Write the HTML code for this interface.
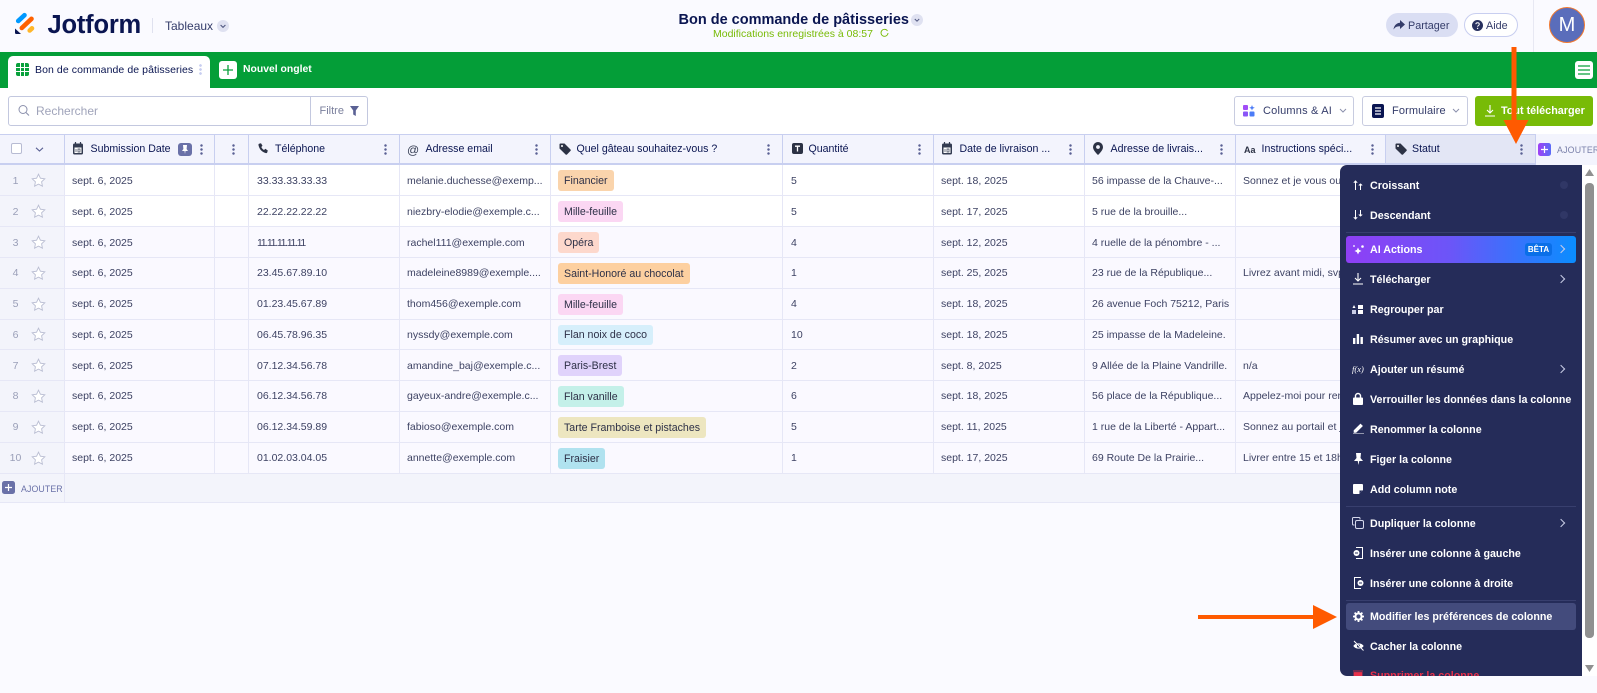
<!DOCTYPE html>
<html lang="fr"><head><meta charset="utf-8"><title>Jotform Tableaux</title>
<style>
*{box-sizing:border-box}
html,body{margin:0;padding:0}
body{width:1597px;height:693px;overflow:hidden;position:relative;background:#fafaff;font-family:"Liberation Sans",sans-serif;color:#0a1551}
.a{position:absolute;white-space:nowrap}
svg{position:absolute;display:block;overflow:visible}
.row{position:absolute;left:0;width:1597px;border-bottom:1px solid #e6e7f6;background:#faf9ff}
.row.w{background:#fff}
.row>div{position:absolute;top:0;bottom:0;display:flex;align-items:center;white-space:nowrap;font-size:10.5px;color:#3d4263;padding-top:1.5px}
.row>.n{left:0;width:64px;background:#f3f4fb;justify-content:center;padding-right:33px;color:#9a9fb8}
.star{position:absolute;left:31px;top:50%;margin-top:-7px}
.c1{left:72px}.c2{left:257px}.c3{left:407px}.c5{left:791px}.c6{left:941px}.c7{left:1092px}.c8{left:1243px}
.row>.t{left:558px;top:5px;bottom:4px;padding:1px 6px 0;border-radius:3px;color:#2d3047;font-size:10.6px}
.vl{position:absolute;top:165px;height:338px;width:1px;background:#e6e7f6}
.h{position:absolute;top:134px;height:31px;background:#f3f4fd;border-top:1.5px solid #c8cff0;border-bottom:2px solid #c8cff0;border-right:1px solid #c8cff0}
.h span{position:absolute;top:6px;font-size:10.6px;line-height:16px;color:#0a1551;white-space:nowrap}
.d{position:absolute;width:3px;height:11px;top:9px;background:radial-gradient(circle at 1.5px 1.5px,#5a6194 1.1px,transparent 1.4px) 0 0/3px 4px}
.m{position:absolute;left:1370px;font-size:10.7px;font-weight:700;color:#fff;white-space:nowrap;line-height:14px;margin-top:1px}
.dv{position:absolute;left:1346px;width:230px;height:1px;background:#383f6e}
.chev{position:absolute;left:1558px;width:6px;height:6px;border-top:1px solid #c9cde6;border-right:1px solid #c9cde6;transform:rotate(45deg)}
</style></head><body>

<!-- top header -->
<svg style="left:0;top:0" width="60" height="52" viewBox="0 0 60 52">
<path d="M18.200 21L24.500 15.200" stroke="#0099ff" stroke-width="4.600" stroke-linecap="round"/>
<path d="M21.800 28L31.500 18.800" stroke="#ff6100" stroke-width="4.600" stroke-linecap="round"/>
<path d="M29.700 30.500L32 28.300" stroke="#ffb629" stroke-width="4.600" stroke-linecap="round"/>
<path d="M15 28.500v4.200c0 .7.600 1.300 1.300 1.300h4.700z" fill="#0a1551"/>
</svg>
<div class="a" style="left:47.500px;top:9.500px;font-size:25.500px;font-weight:700;line-height:30px;letter-spacing:-.2px">Jotform</div>
<div class="a" style="left:152px;top:18px;width:1px;height:15px;background:#dfe1ef"></div>
<div class="a" style="left:165px;top:18px;font-size:12px;line-height:17px;color:#343c6a">Tableaux</div>
<svg style="left:217px;top:19.500px" width="12" height="12" viewBox="0 0 12 12"><circle cx="6" cy="6" r="6" fill="#dfe1f1"/><path d="M3.600 5l2.400 2.400L8.400 5" fill="none" stroke="#4f5680" stroke-width="1.100"/></svg>
<div class="a" style="left:678.500px;top:11px;font-size:14.500px;font-weight:700;line-height:18px">Bon de commande de pâtisseries</div>
<svg style="left:911px;top:14px" width="12" height="12" viewBox="0 0 12 12"><circle cx="6" cy="6" r="6" fill="#dfe1f1"/><path d="M3.800 5l2.200 2.200L8.200 5" fill="none" stroke="#4f5680" stroke-width="1"/></svg>
<div class="a" style="left:713px;top:26.500px;font-size:10.500px;line-height:14px;color:#78bb07">Modifications enregistrées à 08:57</div>
<svg style="left:880px;top:28px" width="9" height="9" viewBox="0 0 9 9"><path d="M7.500 3A3.500 3.500 0 1 0 8 5" fill="none" stroke="#78bb07" stroke-width=".9"/></svg>
<div class="a" style="left:1386px;top:13px;width:72px;height:24px;border-radius:12px;background:#dadef3"></div>
<svg style="left:1393px;top:19px" width="12" height="12" viewBox="0 0 12 12"><path d="M7 1l5 4.500L7 10V7.200C4 7.200 2 8.200.5 10.500 1 6.500 3.500 4 7 3.800z" fill="#343c6a"/></svg>
<div class="a" style="left:1408px;top:18px;font-size:10.800px;line-height:16px;color:#343c6a">Partager</div>
<div class="a" style="left:1464px;top:13px;width:54px;height:24px;border-radius:12px;background:#fff;border:1px solid #c8cef0"></div>
<svg style="left:1472px;top:19.500px" width="11" height="11" viewBox="0 0 11 11"><circle cx="5.500" cy="5.500" r="5.500" fill="#27305e"/><path d="M3.800 4.200c.2-2 3.500-1.900 3.500 0 0 1.300-1.700 1.300-1.700 2.500" fill="none" stroke="#fff" stroke-width="1"/><circle cx="5.600" cy="8.400" r=".7" fill="#fff"/></svg>
<div class="a" style="left:1486px;top:18px;font-size:10.800px;line-height:16px;color:#343c6a">Aide</div>
<div class="a" style="left:1533px;top:0;width:1px;height:52px;background:#e7e8f3"></div>
<div class="a" style="left:1549px;top:7px;width:36px;height:36px;border-radius:50%;background:#5a6dbb;border:1px solid #f07830;color:#fff;font-size:20px;line-height:34px;text-align:center">M</div>

<!-- green tab bar -->
<div class="a" style="left:0;top:52px;width:1597px;height:36px;background:#049e38"></div>
<div class="a" style="left:8px;top:56px;width:202px;height:32px;background:#fff;border-radius:5px 5px 0 0"></div>
<svg style="left:16px;top:63px" width="13" height="13" viewBox="0 0 13 13"><rect width="13" height="13" rx="2" fill="#09a13c"/><path d="M4.500 0v13M8.500 0v13M0 4.500h13M0 8.500h13" stroke="#fff" stroke-width="1"/></svg>
<div class="a" style="left:35px;top:62px;font-size:10.500px;line-height:16px;color:#0a1551;letter-spacing:.08px">Bon de commande de pâtisseries</div>
<div class="d" style="left:199px;top:64px;height:11px;background:radial-gradient(circle at 1.5px 1.5px,#c8cef0 1.2px,transparent 1.5px) 0 0/3px 4px"></div>
<div class="a" style="left:219px;top:61px;width:18px;height:18px;background:#fff;border-radius:3px"></div>
<svg style="left:222px;top:64px" width="12" height="12" viewBox="0 0 12 12"><path d="M6 1v10M1 6h10" stroke="#09a13c" stroke-width="1.300"/></svg>
<div class="a" style="left:243px;top:62px;font-size:10.400px;font-weight:700;line-height:16px;color:#fff">Nouvel onglet</div>
<div class="a" style="left:1575px;top:61px;width:18px;height:18px;background:#fff;border-radius:3px"></div>
<svg style="left:1578px;top:65px" width="12" height="10" viewBox="0 0 12 10"><path d="M0 1h12M0 5h12M0 9h12" stroke="#09a13c" stroke-width="1.300"/></svg>

<!-- toolbar -->
<div class="a" style="left:0;top:88px;width:1597px;height:46px;background:#fff"></div>
<div class="a" style="left:8px;top:96px;width:360px;height:30px;border:1px solid #c3c8df;border-radius:3px;background:#fff"></div>
<div class="a" style="left:310px;top:96px;width:1px;height:30px;background:#c3c8df"></div>
<svg style="left:18px;top:104px" width="12" height="13" viewBox="0 0 12 13"><circle cx="5" cy="5.500" r="4" fill="none" stroke="#8c91ad" stroke-width="1"/><path d="M8 8.500l3 3" stroke="#8c91ad" stroke-width="1.100"/></svg>
<div class="a" style="left:36px;top:102.500px;font-size:12px;line-height:17px;color:#a0a4ba">Rechercher</div>
<div class="a" style="left:319.500px;top:103.500px;font-size:11px;line-height:15px;color:#7a7f9c">Filtre</div>
<svg style="left:350px;top:106px" width="9" height="10" viewBox="0 0 9 10"><path d="M0 0h9L5.800 4.500V10L3.200 8.500v-4z" fill="#5a6194"/></svg>

<div class="a" style="left:1234px;top:96px;width:120px;height:30px;border:1px solid #c8cce0;border-radius:3px;background:#fff"></div>
<svg style="left:1243px;top:105px" width="12" height="12" viewBox="0 0 12 12"><rect width="5" height="5" rx="1" fill="#a24df7"/><rect x="6.500" y="6.500" width="5" height="5" rx="1" fill="#4c7cf7"/><rect y="6.500" width="5" height="5" rx="1" fill="#8a55f7"/><path d="M9 0l.8 2 2 .8-2 .8L9 5.500l-.8-1.900-2-.8 2-.8z" fill="#4c7cf7"/></svg>
<div class="a" style="left:1263px;top:103px;font-size:11px;line-height:16px;color:#343c6a;letter-spacing:.2px">Columns &amp; AI</div>
<svg style="left:1339px;top:108px" width="8" height="5" viewBox="0 0 8 5"><path d="M1 1l3 3 3-3" fill="none" stroke="#8c91ad" stroke-width="1"/></svg>
<div class="a" style="left:1362px;top:96px;width:106px;height:30px;border:1px solid #c8cce0;border-radius:3px;background:#fff"></div>
<svg style="left:1372px;top:104px" width="12" height="14" viewBox="0 0 12 14"><rect width="12" height="14" rx="2" fill="#0a1551"/><path d="M3 4h6M3 7h6M3 10h6" stroke="#fff" stroke-width="1.200"/></svg>
<div class="a" style="left:1392px;top:103px;font-size:11px;line-height:16px;color:#343c6a;letter-spacing:.12px">Formulaire</div>
<svg style="left:1452px;top:108px" width="8" height="5" viewBox="0 0 8 5"><path d="M1 1l3 3 3-3" fill="none" stroke="#8c91ad" stroke-width="1"/></svg>
<div class="a" style="left:1475px;top:96px;width:118px;height:30px;border-radius:3px;background:#78bb07"></div>
<svg style="left:1485px;top:105px" width="10" height="12" viewBox="0 0 10 12"><path d="M5 0v7.500M2 5l3 3 3-3M0 11h10" fill="none" stroke="#fff" stroke-width="1.100"/></svg>
<div class="a" style="left:1501px;top:103px;font-size:10.800px;font-weight:700;line-height:16px;color:#fff">Tout télécharger</div>

<!-- table head -->
<div class="h" style="left:0;width:64.500px"></div>
<div class="a" style="left:11px;top:143px;width:11px;height:11px;border:1px solid #b7bbd3;border-radius:2px;background:#fff"></div>
<svg style="left:35px;top:147px" width="9" height="5" viewBox="0 0 9 5"><path d="M1 .8L4.500 4 8 .8" fill="none" stroke="#5a6194" stroke-width="1.100"/></svg>
<div class="h" style="left:64.500px;width:150px"><span style="left:26px">Submission Date</span><div class="d" style="left:135px"></div></div>
<svg style="left:73px;top:142px" width="10" height="13" viewBox="0 0 10 13"><rect y="1.500" width="10" height="11" rx="1.500" fill="#343c52"/><path d="M2.500 0v3M7.500 0v3" stroke="#343c52" stroke-width="1.200"/><rect x="1.500" y="5.500" width="7" height="5.500" fill="#fff"/><path d="M3 7v3M5 7h2v3H5z" fill="none" stroke="#343c52" stroke-width=".7"/></svg>
<div class="a" style="left:178px;top:143px;width:14px;height:13px;border-radius:3px;background:#6a71a8"></div>
<svg style="left:181px;top:145px" width="8" height="9" viewBox="0 0 8 9"><path d="M2 0h4l-.4 4L7 6H4.500L4 9l-.5-3H1l1.400-2z" fill="#fff"/></svg>
<div class="h" style="left:214.500px;width:34px"><div class="d" style="left:17px"></div></div>
<div class="h" style="left:248.500px;width:151px"><span style="left:26.500px">Téléphone</span><div class="d" style="left:135px"></div></div>
<svg style="left:258px;top:143px" width="11" height="11" viewBox="0 0 11 11"><path d="M1 .8L3 .2l1.500 2.600-1.200 1.200c.5 1.300 1.500 2.400 2.800 3l1.200-1.200 2.500 1.700-.6 2c-.2.500-.8.700-1.300.6C4 9.200 1.500 6.500.5 2.300.4 1.700.5 1.100 1 .8z" fill="#2c3245"/></svg>
<div class="h" style="left:399.500px;width:151px"><span style="left:26px">Adresse email</span><div class="d" style="left:135px"></div></div>
<div class="a" style="left:407px;top:142.500px;font-size:12px;line-height:15px;color:#343c52">@</div>
<div class="h" style="left:550.500px;width:232px"><span style="left:26px">Quel gâteau souhaitez-vous ?</span><div class="d" style="left:216px"></div></div>
<svg style="left:559px;top:143px" width="12" height="12" viewBox="0 0 12 12"><path d="M.5 1.500c0-.6.400-1 1-1h4L11.500 6.500c.4.400.4 1 0 1.400L8 11.500c-.4.400-1 .4-1.400 0L.5 5.500z" fill="#2c3245"/><circle cx="3" cy="3" r="1" fill="#fff"/></svg>
<div class="h" style="left:782.500px;width:151px"><span style="left:26px">Quantité</span><div class="d" style="left:135px"></div></div>
<svg style="left:792px;top:143px" width="11" height="11" viewBox="0 0 11 11"><rect width="11" height="11" rx="2" fill="#2c3245"/><path d="M3 3.200h5M5.500 3.200V8.500" stroke="#fff" stroke-width="1.300"/></svg>
<div class="h" style="left:933.500px;width:151px"><span style="left:26px">Date de livraison ...</span><div class="d" style="left:135px"></div></div>
<svg style="left:942px;top:142px" width="10" height="13" viewBox="0 0 10 13"><rect y="1.500" width="10" height="11" rx="1.500" fill="#343c52"/><path d="M2.500 0v3M7.500 0v3" stroke="#343c52" stroke-width="1.200"/><rect x="1.500" y="5.500" width="7" height="5.500" fill="#fff"/><path d="M3 7v3M5 7h2v3H5z" fill="none" stroke="#343c52" stroke-width=".7"/></svg>
<div class="h" style="left:1084.500px;width:151px"><span style="left:26px">Adresse de livrais...</span><div class="d" style="left:135px"></div></div>
<svg style="left:1093px;top:142px" width="10" height="13" viewBox="0 0 10 13"><path d="M5 0a5 5 0 0 1 5 5c0 3-3 6-5 8-2-2-5-5-5-8a5 5 0 0 1 5-5z" fill="#2c3245"/><circle cx="5" cy="5" r="1.900" fill="#f3f4fd"/></svg>
<div class="h" style="left:1235.500px;width:150.500px"><span style="left:26px">Instructions spéci...</span><div class="d" style="left:135px"></div></div>
<div class="a" style="left:1244px;top:144px;font-size:9px;font-weight:700;line-height:13px;color:#2c3245">Aa</div>
<div class="h" style="left:1386px;width:150px;background:#e3e6f5"><span style="left:26px">Statut</span><div class="d" style="left:134px"></div></div>
<svg style="left:1395px;top:143px" width="12" height="12" viewBox="0 0 12 12"><path d="M.5 1.500c0-.6.400-1 1-1h4L11.500 6.500c.4.400.4 1 0 1.400L8 11.500c-.4.400-1 .4-1.400 0L.5 5.500z" fill="#2c3245"/><circle cx="3" cy="3" r="1" fill="#fff"/></svg>
<div class="a" style="left:1536px;top:134px;width:61px;height:31px;background:#f3f4fd"></div>
<div class="a" style="left:1538px;top:143px;width:13px;height:13px;border-radius:2.500px;background:linear-gradient(90deg,#a040f5,#5a6cf7)"></div>
<svg style="left:1541px;top:146px" width="7" height="7" viewBox="0 0 7 7"><path d="M3.500 0v7M0 3.500h7" stroke="#fff" stroke-width="1.200"/></svg>
<div class="a" style="left:1557px;top:143px;font-size:8.800px;line-height:14px;color:#7a80aa;letter-spacing:.2px">AJOUTER</div>

<!-- rows -->
<div class="row w" style="top:165px;height:31px"><div class="n">1<svg class="star" width="15" height="15" viewBox="0 0 15 15"><path d="M7.500 1.200l1.900 4 4.400.6-3.200 3 .8 4.400-3.900-2.100-3.900 2.100.8-4.400-3.200-3 4.400-.6z" fill="#fff" stroke="#b9bdd2" stroke-width=".9"/></svg></div><div class="c1">sept. 6, 2025</div><div class="c2">33.33.33.33.33</div><div class="c3">melanie.duchesse@exemp...</div><div class="t" style="background:#fad4ac">Financier</div><div class="c5">5</div><div class="c6">sept. 18, 2025</div><div class="c7">56 impasse de la Chauve-...</div><div class="c8">Sonnez et je vous ouvrirai la porte</div></div>
<div class="row w" style="top:196px;height:31px"><div class="n">2<svg class="star" width="15" height="15" viewBox="0 0 15 15"><path d="M7.500 1.200l1.900 4 4.400.6-3.200 3 .8 4.400-3.900-2.100-3.900 2.100.8-4.400-3.200-3 4.400-.6z" fill="#fff" stroke="#b9bdd2" stroke-width=".9"/></svg></div><div class="c1">sept. 6, 2025</div><div class="c2">22.22.22.22.22</div><div class="c3">niezbry-elodie@exemple.c...</div><div class="t" style="background:#fbd7f3">Mille-feuille</div><div class="c5">5</div><div class="c6">sept. 17, 2025</div><div class="c7">5 rue de la brouille...</div></div>
<div class="row" style="top:227px;height:30.500px"><div class="n">3<svg class="star" width="15" height="15" viewBox="0 0 15 15"><path d="M7.500 1.200l1.900 4 4.400.6-3.200 3 .8 4.400-3.900-2.100-3.900 2.100.8-4.400-3.200-3 4.400-.6z" fill="#fff" stroke="#b9bdd2" stroke-width=".9"/></svg></div><div class="c1">sept. 6, 2025</div><div class="c2" style="letter-spacing:-1.300px">11.11.11.11.11</div><div class="c3">rachel111@exemple.com</div><div class="t" style="background:#fdd8cc">Opéra</div><div class="c5">4</div><div class="c6">sept. 12, 2025</div><div class="c7">4 ruelle de la pénombre - ...</div></div>
<div class="row" style="top:257.500px;height:31px"><div class="n">4<svg class="star" width="15" height="15" viewBox="0 0 15 15"><path d="M7.500 1.200l1.900 4 4.400.6-3.200 3 .8 4.400-3.900-2.100-3.900 2.100.8-4.400-3.200-3 4.400-.6z" fill="#fff" stroke="#b9bdd2" stroke-width=".9"/></svg></div><div class="c1">sept. 6, 2025</div><div class="c2">23.45.67.89.10</div><div class="c3">madeleine8989@exemple....</div><div class="t" style="background:#fdd0a0">Saint-Honoré au chocolat</div><div class="c5">1</div><div class="c6">sept. 25, 2025</div><div class="c7">23 rue de la République...</div><div class="c8">Livrez avant midi, svp merci</div></div>
<div class="row" style="top:288.500px;height:31px"><div class="n">5<svg class="star" width="15" height="15" viewBox="0 0 15 15"><path d="M7.500 1.200l1.900 4 4.400.6-3.200 3 .8 4.400-3.900-2.100-3.900 2.100.8-4.400-3.200-3 4.400-.6z" fill="#fff" stroke="#b9bdd2" stroke-width=".9"/></svg></div><div class="c1">sept. 6, 2025</div><div class="c2">01.23.45.67.89</div><div class="c3">thom456@exemple.com</div><div class="t" style="background:#fbd7f3">Mille-feuille</div><div class="c5">4</div><div class="c6">sept. 18, 2025</div><div class="c7">26 avenue Foch 75212, Paris</div></div>
<div class="row" style="top:319.500px;height:30.500px"><div class="n">6<svg class="star" width="15" height="15" viewBox="0 0 15 15"><path d="M7.500 1.200l1.900 4 4.400.6-3.200 3 .8 4.400-3.900-2.100-3.900 2.100.8-4.400-3.200-3 4.400-.6z" fill="#fff" stroke="#b9bdd2" stroke-width=".9"/></svg></div><div class="c1">sept. 6, 2025</div><div class="c2">06.45.78.96.35</div><div class="c3">nyssdy@exemple.com</div><div class="t" style="background:#d6effb">Flan noix de coco</div><div class="c5">10</div><div class="c6">sept. 18, 2025</div><div class="c7">25 impasse de la Madeleine.</div></div>
<div class="row" style="top:350px;height:30.500px"><div class="n">7<svg class="star" width="15" height="15" viewBox="0 0 15 15"><path d="M7.500 1.200l1.900 4 4.400.6-3.200 3 .8 4.400-3.900-2.100-3.900 2.100.8-4.400-3.200-3 4.400-.6z" fill="#fff" stroke="#b9bdd2" stroke-width=".9"/></svg></div><div class="c1">sept. 6, 2025</div><div class="c2">07.12.34.56.78</div><div class="c3">amandine_baj@exemple.c...</div><div class="t" style="background:#e0d3fb">Paris-Brest</div><div class="c5">2</div><div class="c6">sept. 8, 2025</div><div class="c7">9 Allée de la Plaine Vandrille.</div><div class="c8">n/a</div></div>
<div class="row" style="top:380.500px;height:31px"><div class="n">8<svg class="star" width="15" height="15" viewBox="0 0 15 15"><path d="M7.500 1.200l1.900 4 4.400.6-3.200 3 .8 4.400-3.900-2.100-3.900 2.100.8-4.400-3.200-3 4.400-.6z" fill="#fff" stroke="#b9bdd2" stroke-width=".9"/></svg></div><div class="c1">sept. 6, 2025</div><div class="c2">06.12.34.56.78</div><div class="c3">gayeux-andre@exemple.c...</div><div class="t" style="background:#c4f0e9">Flan vanille</div><div class="c5">6</div><div class="c6">sept. 18, 2025</div><div class="c7">56 place de la République...</div><div class="c8">Appelez-moi pour rendez-vous</div></div>
<div class="row" style="top:411.500px;height:31px"><div class="n">9<svg class="star" width="15" height="15" viewBox="0 0 15 15"><path d="M7.500 1.200l1.900 4 4.400.6-3.200 3 .8 4.400-3.900-2.100-3.900 2.100.8-4.400-3.200-3 4.400-.6z" fill="#fff" stroke="#b9bdd2" stroke-width=".9"/></svg></div><div class="c1">sept. 6, 2025</div><div class="c2">06.12.34.59.89</div><div class="c3">fabioso@exemple.com</div><div class="t" style="background:#ede6c0">Tarte Framboise et pistaches</div><div class="c5">5</div><div class="c6">sept. 11, 2025</div><div class="c7">1 rue de la Liberté - Appart...</div><div class="c8">Sonnez au portail et je viens</div></div>
<div class="row" style="top:442.500px;height:31px"><div class="n">10<svg class="star" width="15" height="15" viewBox="0 0 15 15"><path d="M7.500 1.200l1.900 4 4.400.6-3.200 3 .8 4.400-3.900-2.100-3.900 2.100.8-4.400-3.200-3 4.400-.6z" fill="#fff" stroke="#b9bdd2" stroke-width=".9"/></svg></div><div class="c1">sept. 6, 2025</div><div class="c2">01.02.03.04.05</div><div class="c3">annette@exemple.com</div><div class="t" style="background:#b0e2ef">Fraisier</div><div class="c5">1</div><div class="c6">sept. 17, 2025</div><div class="c7">69 Route De la Prairie...</div><div class="c8">Livrer entre 15 et 18h svp</div></div>
<div class="vl" style="left:64px;height:308px"></div><div class="vl" style="left:214px;height:308px"></div><div class="vl" style="left:248px;height:308px"></div><div class="vl" style="left:399px;height:308px"></div><div class="vl" style="left:550px;height:308px"></div><div class="vl" style="left:782px;height:308px"></div><div class="vl" style="left:933px;height:308px"></div><div class="vl" style="left:1084px;height:308px"></div><div class="vl" style="left:1235px;height:308px"></div><div class="vl" style="left:1385px;height:308px"></div><div class="vl" style="left:1536px;height:308px"></div>

<!-- add row -->
<div class="a" style="left:0;top:473.500px;width:1597px;height:29px;background:#f3f4fb;border-bottom:1px solid #e6e7f6"></div>
<div class="vl" style="left:64px;top:473px;height:29px"></div>
<div class="a" style="left:2px;top:481px;width:13px;height:13px;border-radius:2.500px;background:#6a71a8"></div>
<svg style="left:5px;top:484px" width="7" height="7" viewBox="0 0 7 7"><path d="M3.500 0v7M0 3.500h7" stroke="#fff" stroke-width="1.200"/></svg>
<div class="a" style="left:21px;top:481.500px;font-size:8.800px;line-height:14px;color:#6a71a8;letter-spacing:.1px">AJOUTER</div>

<!-- menu -->
<div class="a" style="left:1582px;top:165px;width:15px;height:511px;background:#fff"></div>
<div class="a" style="left:1585px;top:183px;width:9px;height:455px;border-radius:4px;background:#909090"></div>
<svg style="left:1585px;top:169px" width="9" height="7" viewBox="0 0 9 7"><path d="M4.500 0L9 7H0z" fill="#909090"/></svg>
<svg style="left:1585px;top:665px" width="9" height="7" viewBox="0 0 9 7"><path d="M4.500 7L9 0H0z" fill="#909090"/></svg>
<div class="a" style="left:1340px;top:165px;width:242px;height:511px;background:#252c59;border-radius:7px 0 0 7px;overflow:hidden"></div>
<div class="a" style="left:1346px;top:236px;width:230px;height:27px;border-radius:3px;background:linear-gradient(90deg,#8f3ff5,#6c55f8 45%,#0a8dff)"></div>
<div class="a" style="left:1346px;top:603px;width:230px;height:27px;border-radius:3px;background:#434b7c"></div>
<div class="dv" style="top:232px"></div><div class="dv" style="top:506px"></div><div class="dv" style="top:600px"></div>
<div class="a" style="left:1560px;top:181px;width:8px;height:8px;border-radius:50%;background:#303766"></div>
<div class="a" style="left:1560px;top:211px;width:8px;height:8px;border-radius:50%;background:#303766"></div>
<div class="a" style="left:1525px;top:243px;width:27px;height:13px;border-radius:3px;background:#0a6fe8;color:#fff;font-size:8px;font-weight:700;line-height:13px;text-align:center">BÊTA</div>
<div class="chev" style="top:246px"></div><div class="chev" style="top:276px"></div><div class="chev" style="top:366px"></div><div class="chev" style="top:520px"></div>

<div class="m" style="top:178px">Croissant</div>
<div class="m" style="top:208px">Descendant</div>
<div class="m" style="top:242px">AI Actions</div>
<div class="m" style="top:272px">Télécharger</div>
<div class="m" style="top:302px">Regrouper par</div>
<div class="m" style="top:332px">Résumer avec un graphique</div>
<div class="m" style="top:362px">Ajouter un résumé</div>
<div class="m" style="top:392px">Verrouiller les données dans la colonne</div>
<div class="m" style="top:422px">Renommer la colonne</div>
<div class="m" style="top:452px">Figer la colonne</div>
<div class="m" style="top:482px">Add column note</div>
<div class="m" style="top:516px">Dupliquer la colonne</div>
<div class="m" style="top:546px">Insérer une colonne à gauche</div>
<div class="m" style="top:576px">Insérer une colonne à droite</div>
<div class="m" style="top:609px">Modifier les préférences de colonne</div>
<div class="m" style="top:639px">Cacher la colonne</div>
<div class="a" style="left:1340px;top:660px;width:242px;height:16px;overflow:hidden"><div class="m" style="left:30px;top:8px;color:#e8304a">Supprimer la colonne</div><svg style="left:13px;top:10px" width="10" height="10" viewBox="0 0 10 10"><path d="M0 1h10M1 2.500h8V10H1z" fill="#e8304a" stroke="#e8304a" stroke-width=".8"/></svg></div>

<svg style="left:1353px;top:180px" width="10" height="10" viewBox="0 0 10 10"><path d="M2.500 10V1M.8 2.800L2.500 1l1.700 1.800M7.500 10V4M5.800 5.500L7.500 4l1.700 1.500" fill="none" stroke="#fff" stroke-width="1"/></svg>
<svg style="left:1353px;top:210px" width="10" height="10" viewBox="0 0 10 10"><path d="M2.500 0v9M.8 7.200L2.500 9l1.700-1.800M7.500 0v6M5.800 4.500L7.500 6l1.700-1.500" fill="none" stroke="#fff" stroke-width="1"/></svg>
<svg style="left:1353px;top:244px" width="11" height="11" viewBox="0 0 11 11"><path d="M5 3.500l1.100 2.400L8.500 7 6.100 8.100 5 10.500 3.900 8.100 1.500 7l2.400-1.100z" fill="#fff"/><circle cx="9.500" cy="2.500" r="1.300" fill="#fff"/><circle cx="1" cy="2" r=".9" fill="#fff"/></svg>
<svg style="left:1353px;top:273px" width="10" height="12" viewBox="0 0 10 12"><path d="M5 0v7.500M2 5l3 3 3-3M0 11h10" fill="none" stroke="#fff" stroke-width="1.100"/></svg>
<svg style="left:1352px;top:305px" width="11" height="9" viewBox="0 0 11 9"><rect x="6" width="5" height="4" fill="#fff"/><rect x="6" y="5" width="5" height="4" fill="#fff"/><rect x="0" y="5" width="4" height="4" fill="#c9cde6"/><path d="M2 0l1.500 3h-3z" fill="#fff"/></svg>
<svg style="left:1353px;top:334px" width="10" height="10" viewBox="0 0 10 10"><rect y="4" width="2.400" height="6" fill="#fff"/><rect x="3.700" width="2.400" height="10" fill="#fff"/><rect x="7.500" y="3" width="2.400" height="7" fill="#fff"/></svg>
<div class="a" style="left:1352px;top:363px;font-size:8.500px;font-style:italic;line-height:13px;color:#fff;font-family:'Liberation Serif',serif">f(x)</div>
<svg style="left:1353px;top:393px" width="10" height="12" viewBox="0 0 10 12"><rect y="4.500" width="10" height="7.500" rx="1" fill="#fff"/><path d="M2.500 5V3a2.500 2.500 0 0 1 5 0v2" fill="none" stroke="#fff" stroke-width="1.400"/></svg>
<svg style="left:1353px;top:423px" width="11" height="11" viewBox="0 0 11 11"><path d="M1 7.500L7.500 1l2 2L3 9.500H1zM0 10.500h11" fill="#fff" stroke="#fff" stroke-width=".6"/></svg>
<svg style="left:1354px;top:453px" width="9" height="12" viewBox="0 0 9 12"><path d="M2 0h5l-.5 5L9 8H5.300L4.500 12 3.700 8H0l2.500-3z" fill="#fff"/></svg>
<svg style="left:1353px;top:484px" width="10" height="10" viewBox="0 0 10 10"><path d="M1 0h8c.6 0 1 .4 1 1v5L6 10H1c-.6 0-1-.4-1-1V1c0-.6.4-1 1-1z" fill="#fff"/><path d="M6.500 9.500V6.500h3" fill="#252c59"/></svg>
<svg style="left:1352px;top:517px" width="12" height="12" viewBox="0 0 12 12"><rect x="3.500" y="3.500" width="8" height="8" rx="1.500" fill="none" stroke="#d5d8ec" stroke-width="1"/><path d="M2.500 8H1.500C.9 8 .5 7.600 .5 7V1.500C.5.900.9.500 1.500.500H7c.6 0 1 .4 1 1v1" fill="none" stroke="#d5d8ec" stroke-width="1"/></svg>
<svg style="left:1353px;top:547px" width="10" height="12" viewBox="0 0 10 12"><path d="M3 .5h6.500v11H3" fill="none" stroke="#fff" stroke-width="1"/><circle cx="3.500" cy="6" r="3" fill="#fff"/><path d="M2 6h3" stroke="#252c59" stroke-width="1"/></svg>
<svg style="left:1354px;top:577px" width="10" height="12" viewBox="0 0 10 12"><path d="M7 .5H.5v11H7" fill="none" stroke="#fff" stroke-width="1"/><circle cx="6.500" cy="6" r="3" fill="#fff"/><path d="M5 6h3" stroke="#252c59" stroke-width="1"/></svg>
<svg style="left:1353px;top:611px" width="11" height="11" viewBox="0 0 11 11"><circle cx="5.500" cy="5.500" r="3.100" fill="none" stroke="#fff" stroke-width="2"/><path d="M5.500 0v2M5.500 9v2M0 5.500h2M9 5.500h2M1.600 1.600L3 3M8 8l1.400 1.400M1.600 9.400L3 8M8 3l1.400-1.400" stroke="#fff" stroke-width="1.800"/></svg>
<svg style="left:1353px;top:641px" width="11" height="10" viewBox="0 0 11 10"><path d="M.3 5C2.500 1.500 8.500 1.500 10.700 5 8.500 8.500 2.500 8.500.3 5z" fill="#fff"/><circle cx="5.500" cy="5" r="1.600" fill="#252c59"/><path d="M1.500 .8l8.500 8.500" stroke="#252c59" stroke-width="1"/><path d="M1 0l9.500 9.500" stroke="#fff" stroke-width="1"/></svg>

<!-- annotation arrows -->
<svg style="left:0;top:0" width="1597" height="693" viewBox="0 0 1597 693">
<path d="M1511.500 47h5v73h12l-12.500 24-12.500-24h8z" fill="#ff5a00"/>
<path d="M1198 615h115v-10l24 12-24 12v-10h-115z" fill="#ff5a00"/>
</svg>
</body></html>
